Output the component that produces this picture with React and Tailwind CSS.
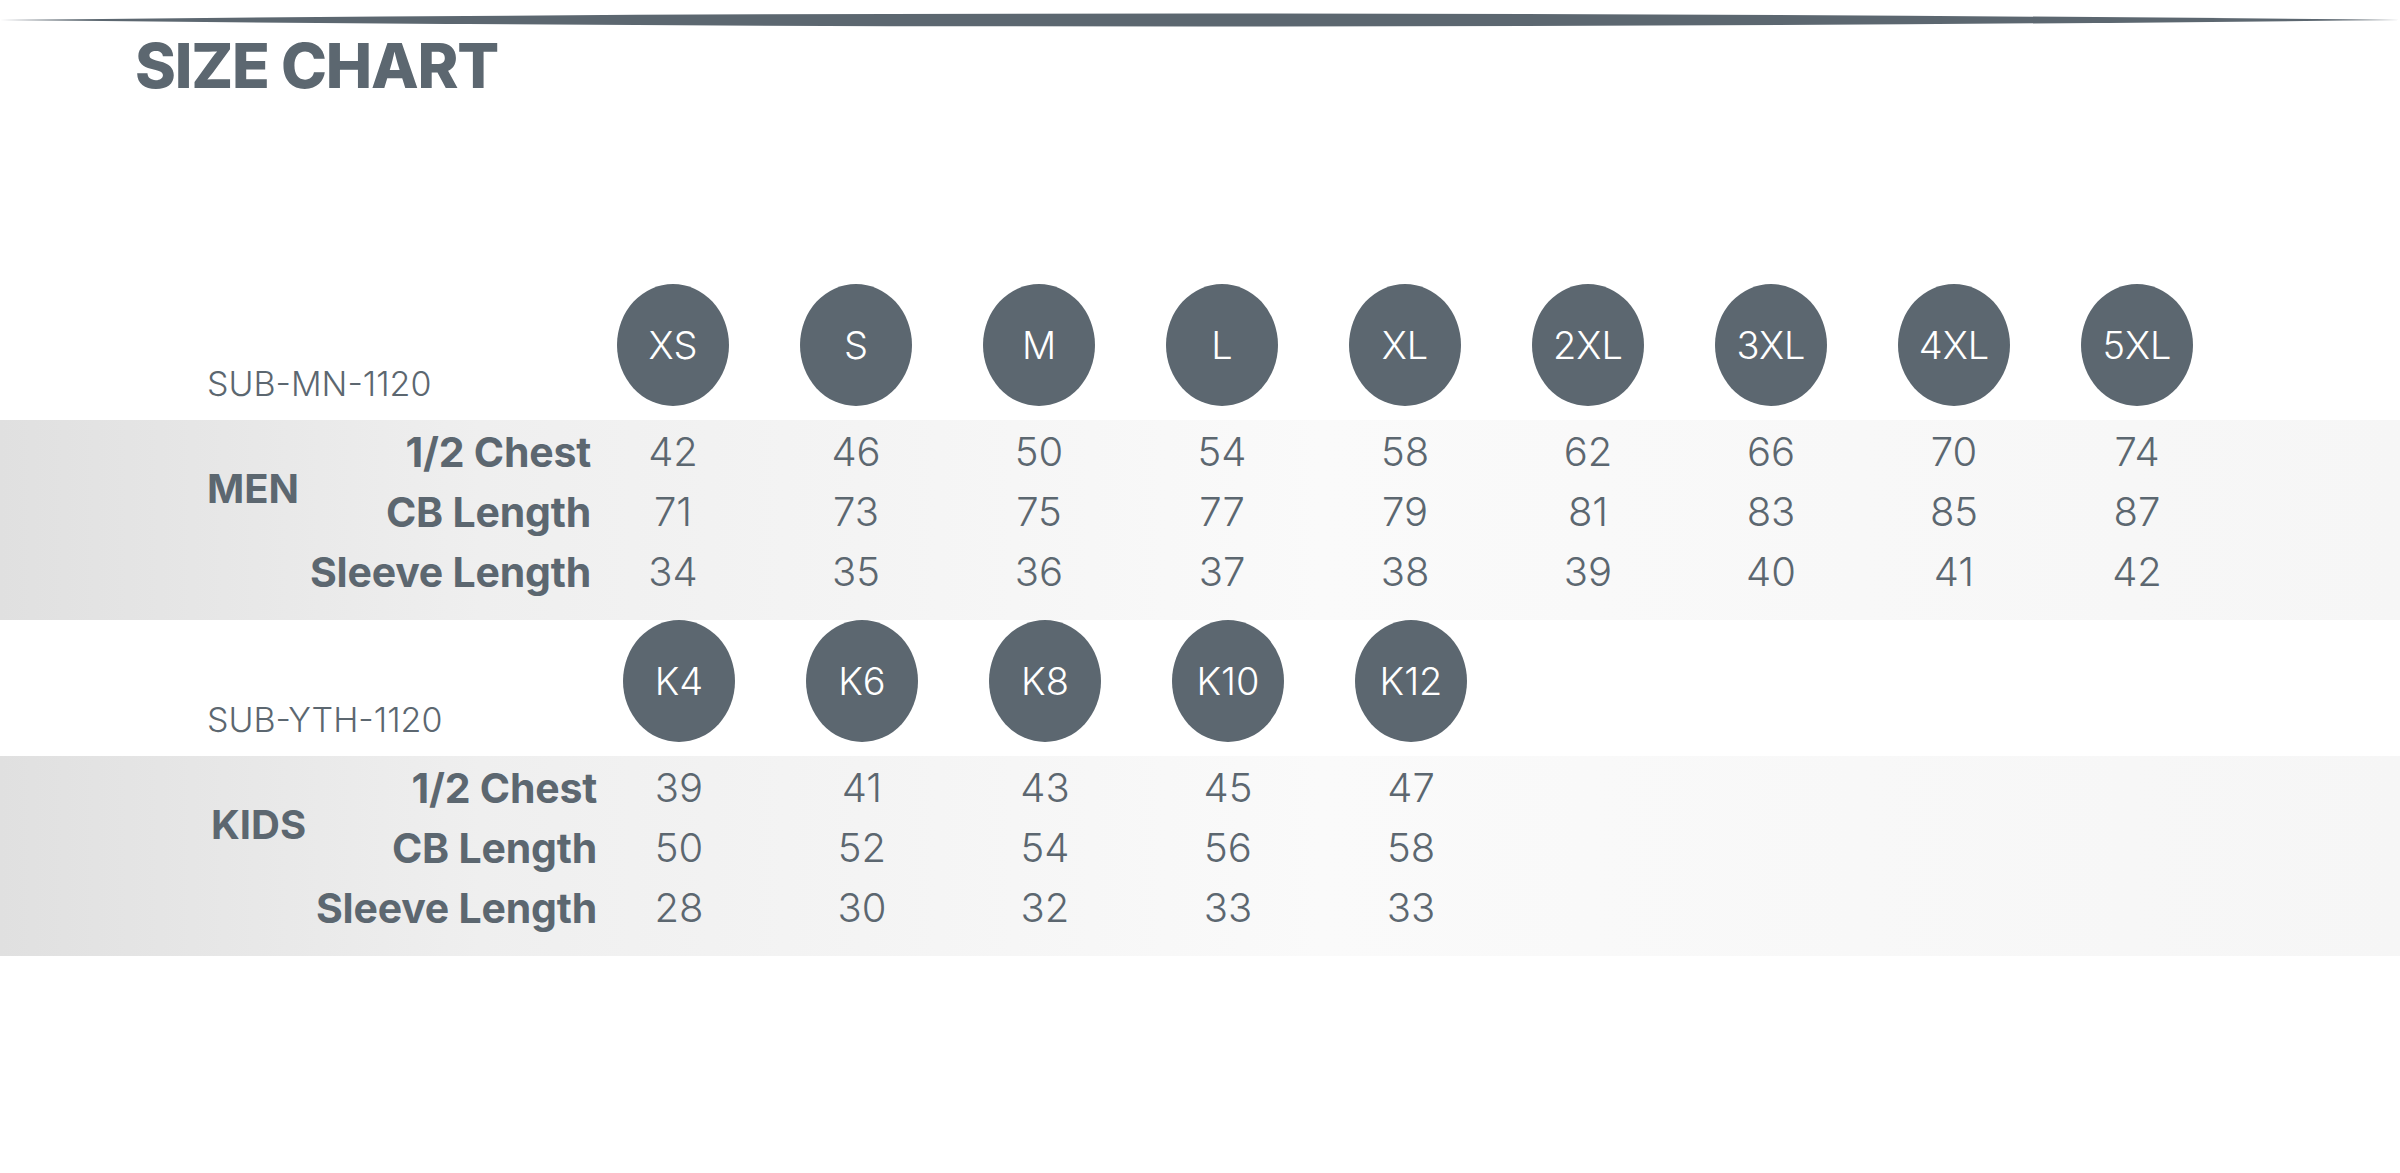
const menSizes = ["XS", "S", "M", "L", "XL", "2XL", "3XL", "4XL", "5XL"];
const menRows = [
  { label: "1/2 Chest", values: [42, 46, 50, 54, 58, 62, 66, 70, 74] },
  { label: "CB Length", values: [71, 73, 75, 77, 79, 81, 83, 85, 87] },
  { label: "Sleeve Length", values: [34, 35, 36, 37, 38, 39, 40, 41, 42] },
];

const kidSizes = ["K4", "K6", "K8", "K10", "K12"];
const kidRows = [
  { label: "1/2 Chest", values: [39, 41, 43, 45, 47] },
  { label: "CB Length", values: [50, 52, 54, 56, 58] },
  { label: "Sleeve Length", values: [28, 30, 32, 33, 33] },
];

function TopRule() {
  return (
    <svg className="block w-full h-[40px]" viewBox="0 0 2400 40" preserveAspectRatio="none">
      <path d="M0 20 Q1200 7 2400 20 Q1200 33 0 20 Z" fill="#5c6770" />
    </svg>
  );
}

function SizeSection({ code, group, sizes, rows, shift }) {
  return (
    <div>
      <div className="flex items-end pb-[14px]">
        <div className={`${shift ? "w-[597px]" : "w-[591px]"} pl-[207px]`}>
          <span className="block text-[34px] font-light leading-none mb-[5px] whitespace-nowrap">
            {code}
          </span>
        </div>
        <div className="flex gap-[37px] ml-[9px]">
          {sizes.map((s) => (
            <div key={s} className="w-[146px] flex justify-center">
              <div className="w-[112px] h-[122px] rounded-[50%] bg-[#5c6770] flex items-center justify-center text-white text-[38px] font-light leading-none">
                {s}
              </div>
            </div>
          ))}
        </div>
      </div>

      <div className="h-[200px] pt-[2px] bg-[linear-gradient(90deg,#e0e0e0_0%,#efefef_20%,#fafafa_55%,#f6f6f6_100%)]">
        <div className="flex">
          <div className={`relative ${shift ? "w-[597px]" : "w-[591px]"}`}>
            <span
              className={`absolute ${shift ? "left-[211px]" : "left-[207px]"} top-[47px] text-[40px] font-bold leading-none`}
            >
              {group}
            </span>
            {rows.map((r) => (
              <div key={r.label} className="h-[60px] flex items-center justify-end">
                <span className="text-[41px] font-bold leading-none whitespace-nowrap tracking-[-0.005em]">
                  {r.label}
                </span>
              </div>
            ))}
          </div>
          <div className="ml-[9px]">
            {rows.map((r) => (
              <div key={r.label} className="h-[60px] flex items-center gap-[37px]">
                {r.values.map((v, i) => (
                  <div key={i} className="w-[146px] text-center text-[40px] font-light leading-none">
                    {v}
                  </div>
                ))}
              </div>
            ))}
          </div>
        </div>
      </div>
    </div>
  );
}

export default function App() {
  return (
    <div className="w-[2400px] h-[1173px] bg-white overflow-hidden text-[#5c6770] font-['Inter','DejaVu_Sans',sans-serif]">
      <TopRule />
      <h1 className="pl-[135px] -mt-[5px] text-[62px] font-extrabold leading-none tracking-[-0.02em]">
        SIZE CHART
      </h1>

      <div className="mt-[187px]">
        <SizeSection code="SUB-MN-1120" group="MEN" sizes={menSizes} rows={menRows} />
        <SizeSection code="SUB-YTH-1120" group="KIDS" sizes={kidSizes} rows={kidRows} shift />
      </div>
    </div>
  );
}
